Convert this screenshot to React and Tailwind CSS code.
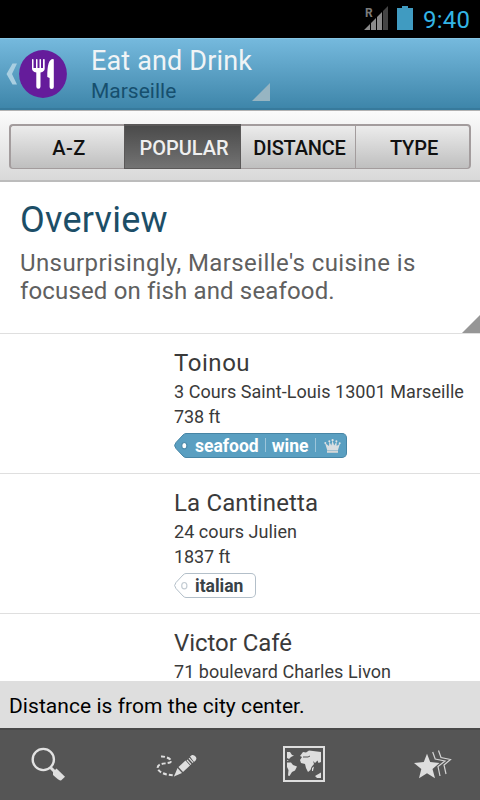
import clsx from "clsx";

const TABS = [
  { label: "A-Z", width: "w-[115px]", text: "tracking-[0.4px] pl-[3px]", edge: "border-l-2 rounded-l-[4px]" },
  { label: "POPULAR", width: "w-[117px]", text: "tracking-[0px] pl-[3px]", edge: "border-x" },
  { label: "DISTANCE", width: "w-[114px]", text: "tracking-[-0.2px] pl-[3px]", edge: "" },
  { label: "TYPE", width: "w-[116px]", text: "tracking-[-0.1px] pl-[3px]", edge: "border-l border-r-2 rounded-r-[4px]" },
];

const PLACES = [
  { name: "Toinou", address: "3 Cours Saint-Louis 13001 Marseille", distance: "738 ft", tags: ["seafood", "wine"], featured: true, nameClass: "tracking-[0.55px]" },
  { name: "La Cantinetta", address: "24 cours Julien", distance: "1837 ft", tags: ["italian"], nameClass: "tracking-[0.15px]" },
  { name: "Victor Café", address: "71 boulevard Charles Livon", tags: [], nameClass: "tracking-[-0.05px]" },
];

function StatusBar() {
  return (
    <div className="flex h-[38px] shrink-0 bg-black">
      <svg className="ml-[364px] mt-[6px]" width="24" height="24">
        <text x="1" y="11" fontSize="12" fontWeight="700" fill="#7b7b7b" fontFamily="Roboto, sans-serif">R</text>
        <path d="M0 24 L6 18 V24Z M7 17 L12 12 V24 H7Z M13 11 L18 6 V24 H13Z" fill="#8a8a8a" />
        <path d="M19 5 L24 0 V24 H19Z" fill="#444" />
      </svg>
      <svg className="ml-[9px] mt-[6px]" width="16" height="24">
        <path d="M5 0 H11 V2 H16 V24 H0 V2 H5Z" fill="#409bc1" />
      </svg>
      <span className="ml-[10px] mt-[6px] text-2xl leading-[28px] tracking-[0.2px] text-[#33b5e5]">9:40</span>
    </div>
  );
}

function Header() {
  return (
    <div className="flex h-[72px] shrink-0 border-b-2 border-b-[#377a9c] border-t border-t-[#86c5e3] bg-linear-to-b from-[#75b9dd] to-[#3e86aa]">
      <svg className="ml-[6px] mt-[24px]" width="12" height="23">
        <path d="M6.5 0.5 H11 L6 11 L11 21.5 H6.5 L0.5 11Z" fill="#a9cfe1" />
      </svg>
      <svg className="ml-[1px] mt-[11px]" width="48" height="48">
        <circle cx="24" cy="24" r="23.9" fill="#651c9b" />
        <path
          d="M13 9.5 Q13 9 13.7 9 T14.5 9.5 V18 H17 V9.5 Q17 9 17.7 9 T18.5 9.5 V18 H20.5 V9.5 Q20.5 9 21.2 9 T22 9.5 V18 H24 V9.5 Q24 9 24.8 9 T25.7 9.5 V18.5 Q25.7 21.5 21.5 22.5 V36.5 Q21.5 38.8 19.4 38.8 T17.3 36.5 V22.5 Q13 21.5 13 18.5Z"
          fill="#fff"
        />
        <path d="M34.8 9.5 V37 Q34.8 39 32.7 39 T30.6 37 V28 L28.3 27 Q28 9 34 9Z" fill="#fff" />
      </svg>
      <div className="ml-[24px] w-[161px] pt-[6px]">
        <div className="text-[27px] leading-[32px] tracking-[0.15px] whitespace-nowrap text-[#f0f4f6]">Eat and Drink</div>
        <div className="mt-[2px] text-[21px] leading-[25px] text-[#164f6e]">Marseille</div>
      </div>
      <svg className="mt-[44px]" width="18" height="18">
        <path d="M18 0 V18 H0Z" fill="#97b5c2" />
      </svg>
    </div>
  );
}

function SortTabs() {
  return (
    <div className="flex h-[72px] shrink-0 border-t border-b-2 border-t-[#b2b2b2] border-b-[#bcbcbc] bg-linear-to-b from-[#fbfbfb] to-[#d9d9d9] px-[9px] pt-[13px]">
      {TABS.map((tab) => (
        <div
          key={tab.label}
          className={clsx(
            "flex h-[45px] shrink-0 items-center justify-center border-t-2 border-b text-xl font-medium",
            tab.width,
            tab.edge,
            tab.label === "POPULAR"
              ? "border-[#5a5858] bg-linear-to-b from-[#4b4b4b] to-[#737373] text-[#efefef]"
              : "border-[#a39c9d] bg-linear-to-b from-[#ececec] to-[#bfbfbf] text-[#111]"
          )}
        >
          <span className={clsx("pt-[2px]", tab.text)}>{tab.label}</span>
        </div>
      ))}
    </div>
  );
}

function Overview() {
  return (
    <div className="flex h-[152px] shrink-0 items-end border-b border-[#dfdfdf]">
      <div className="h-full w-[462px] shrink-0 pl-5 pt-[17px]">
        <h1 className="text-4xl leading-[42px] tracking-[0.25px] text-[#1c4e67]">Overview</h1>
        <p className="mt-[8px] text-2xl leading-[28px] whitespace-nowrap text-[#606060]">
          <span className="tracking-[0.4px]">Unsurprisingly, Marseille's cuisine is</span>
          <br />
          <span className="tracking-[0.15px]">focused on fish and seafood.</span>
        </p>
      </div>
      <svg width="18" height="18">
        <path d="M18 0 V18 H0Z" fill="#969696" />
      </svg>
    </div>
  );
}

function Crown() {
  return (
    <svg className="ml-[8px]" width="17" height="16">
      <path
        d="M1 5 L5 8 L5.3 3.5 L7.3 7.5 L8.5 2.5 L10.2 7.5 L12.5 3.5 L12.7 8 L16 5.5 L14 12 H3.2Z"
        fill="#d9dee1"
      />
      <path d="M3 12.4 H14 V14.8 H3Z" fill="#d5d7d8" />
      <circle cx="1.3" cy="5" r="1" fill="#e1e3e4" />
      <circle cx="5.3" cy="3.3" r="1" fill="#e1e3e4" />
      <circle cx="8.6" cy="2.2" r="1.1" fill="#e1e3e4" />
      <circle cx="12.4" cy="3.3" r="1" fill="#e1e3e4" />
      <circle cx="15.7" cy="5.3" r="1" fill="#e1e3e4" />
    </svg>
  );
}

function TagLabel({ tags, featured }) {
  return (
    <div className="mt-[4px] flex h-[25px]">
      <svg className="shrink-0" width="14" height="25">
        <path
          d="M14.5 0.5 H12 Q10.5 0.5 9 2 L2 9.5 Q-0.8 12.5 2 15.5 L9 23 Q10.5 24.5 12 24.5 H14.5"
          fill={featured ? "#5a9fc1" : "#fff"}
          stroke={featured ? "#4785a5" : "#b3bfc9"}
        />
        <ellipse
          cx="10.3"
          cy="12.7"
          rx="2.6"
          ry="3.2"
          fill="#fff"
          stroke={featured ? "#4c8baa" : "#c4ccd3"}
          strokeWidth="1.2"
        />
      </svg>
      <div
        className={clsx(
          "flex items-center rounded-r-[5px] border-y border-r pl-[7px] text-[17.5px] leading-[23px] font-bold",
          featured ? "w-[159px] border-[#4785a5] bg-[#5a9fc1] text-white" : "w-[68px] border-[#b3bfc9] bg-white text-[#384247]"
        )}
      >
        {tags.map((tag, i) => (
          <span key={tag} className="flex items-center pt-px">
            {i > 0 && <span className="mx-[6px] -mt-[3px] h-[14px] w-px bg-[#9cc5da]" />}
            {tag}
          </span>
        ))}
        {featured && (
          <>
            <span className="ml-[7px] -mt-[2px] h-[14px] w-px bg-[#9cc5da]" />
            <Crown />
          </>
        )}
      </div>
    </div>
  );
}

function PlaceRow({ place }) {
  return (
    <div className="h-[140px] shrink-0 border-b border-[#dfdfdf] pt-[15px] pl-[174px] whitespace-nowrap text-[#3a3a3a]">
      <div className={clsx("text-2xl leading-[29px]", place.nameClass)}>{place.name}</div>
      <div className="mt-px text-lg leading-[25px] tracking-[0.05px]">{place.address}</div>
      {place.distance && <div className="text-lg leading-[25px] tracking-[-0.1px]">{place.distance}</div>}
      {place.tags.length > 0 && <TagLabel tags={place.tags} featured={place.featured} />}
    </div>
  );
}

function MapIcon() {
  return (
    <svg width="42" height="36">
      <rect x="1" y="1" width="40" height="34" fill="none" stroke="#dedede" strokeWidth="2" />
      <g fill="#dedede">
        <path d="M4 6 L7 6 L9 9 L11 9.5 L8 11 L6 13 L4 12Z M4 14 L6 15 H4Z" />
        <path d="M4 16.5 L8 16.5 L10 19 L14 20.5 L12 24.5 L9 26 L6.5 30 L5 29.5 L5.5 24 L4 21Z" />
        <path d="M17 10 L20 6 L23 6.5 L26 4.5 L30 5 L38 6 V16 L35.5 17 L34.5 14.5 L32 17 L30 15 L31 18 L28.5 21 L27.5 24 L25 26 L23 22 L22 18 L18 17 L17 14 L19 11Z" />
        <path d="M29 22 L31 20.5 L30 25 H29Z M32 30 L38 26.5 V32 H34Z" />
      </g>
      <path d="M20 11 H25 L27 10" fill="none" stroke="#555" />
    </svg>
  );
}

function BottomBar() {
  return (
    <div className="flex h-[72px] shrink-0 border-t-2 border-[#494949] bg-[#555]">
      <svg className="mt-[17px] ml-[31px]" width="35" height="35">
        <circle cx="12.3" cy="12.5" r="10.6" fill="none" stroke="#e2e2e2" strokeWidth="2.4" />
        <path d="M19.5 20.5 L23.5 24.5" stroke="#dedede" strokeWidth="3" />
        <path d="M22 25 L25.5 21.5 L34 29.8 L30 33.5 Q28.5 34 22 28Z" fill="#dedede" />
      </svg>
      <svg className="mt-[23px] ml-[90px]" width="41" height="25">
        <path
          d="M5 3.5 C10 3 18 7 14 9.5 C9 11 2 10 1.5 15 C3 20 10 22 19 22.5"
          fill="none"
          stroke="#dedede"
          strokeWidth="2"
          strokeDasharray="4 2"
        />
        <g fill="#dedede">
          <path d="M18 23.5 L21.5 15 L26 20Z" />
          <path d="M22.5 14 L29.5 7.5 L34 12.5 L27 19Z" />
          <path d="M34 3.5 L36 2 Q38 1.5 40 4 Q41 6 39.8 7.2 L38 9Z" />
        </g>
        <path d="M31 7 L35 11.5 M33 5.2 L37 9.7" stroke="#dedede" strokeWidth="1.2" />
      </svg>
      <div className="mt-[16px] ml-[86px]">
        <MapIcon />
      </div>
      <svg className="mt-[20px] ml-[89px]" width="38" height="30">
        <path
          d="M18.7 2 L21.2 9 L31 11 L24 16.5 L26 26 M24.5 0.5 L27 7.5 L36.5 9.5 L30 15 L32 24"
          fill="none"
          stroke="#d5d5d5"
          strokeWidth="1.2"
        />
        <path
          d="M13 3.8 L16.2 12 L25.5 13 L18.5 19 L21 28.3 L13 23.3 L5 28.3 L7.3 19 L0 13 L9.8 12Z"
          fill="#dedede"
        />
      </svg>
    </div>
  );
}

export default function App() {
  return (
    <div className="flex h-[800px] w-[480px] flex-col overflow-hidden bg-white font-[Roboto,sans-serif]">
      <StatusBar />
      <Header />
      <SortTabs />
      <Overview />
      <div className="flex min-h-0 flex-1 flex-col overflow-hidden">
        {PLACES.map((place) => (
          <PlaceRow key={place.name} place={place} />
        ))}
      </div>
      <div className="h-[47px] shrink-0 bg-[#dedede] pt-[13px] pl-[9px] text-[21px] leading-[25px] tracking-[0.05px] text-black">
        Distance is from the city center.
      </div>
      <BottomBar />
    </div>
  );
}
